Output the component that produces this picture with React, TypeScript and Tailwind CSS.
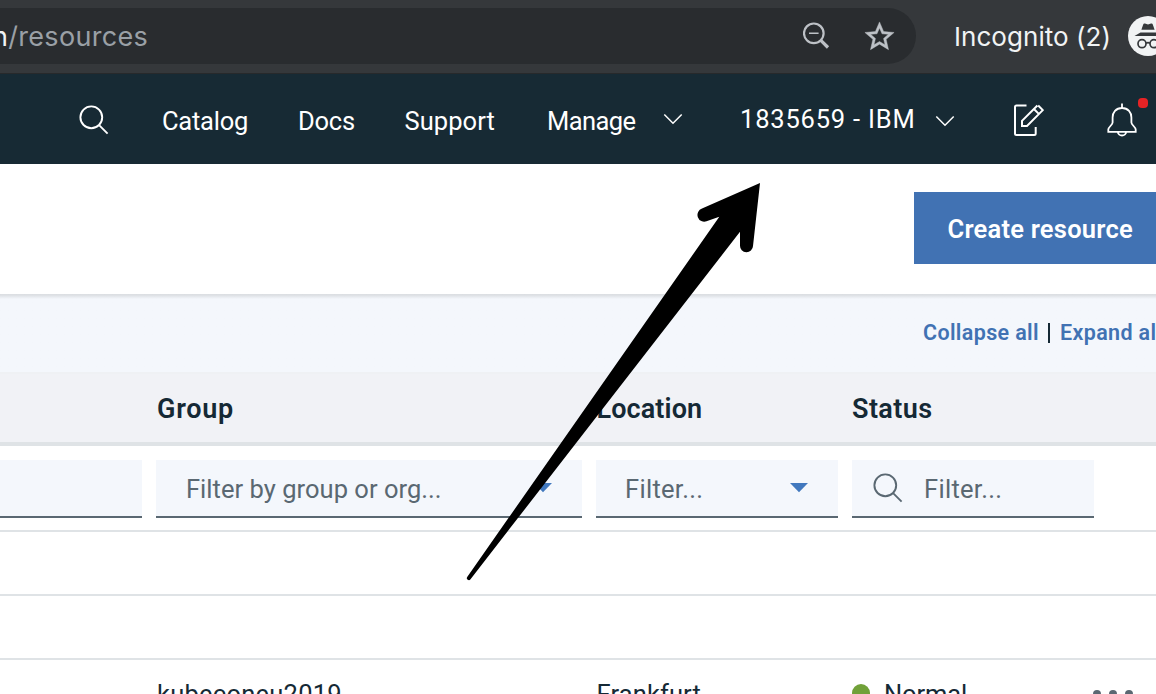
import React from 'react';

const plex = "font-['Roboto','Liberation_Sans',sans-serif]";

function SearchIcon({ className }: { className: string }) {
  return (
    <svg className={className} viewBox="0 0 32 32" fill="none" stroke="currentColor" strokeWidth="1.9">
      <circle cx="13.3" cy="13.3" r="10.9" />
      <path d="M21.1 21.1 29.6 29.6" />
    </svg>
  );
}

function Chevron({ className }: { className: string }) {
  return (
    <svg className={className} viewBox="0 0 20 12" fill="none" stroke="currentColor" strokeWidth="1.5">
      <path d="M1.3 1.5 10 10.2l8.7-8.7" />
    </svg>
  );
}

function BrowserBar() {
  return (
    <div className="flex h-[74px] w-full shrink-0 border-b border-[#27292b] bg-[#35383b] pt-2 font-['Inter','Liberation_Sans',sans-serif]">
      <div className="flex h-14 w-[916px] shrink-0 overflow-hidden rounded-r-full bg-[#292c2f]">
        <div className="-ml-[8px] flex w-[811px] shrink-0 whitespace-pre text-[27px] leading-[58px] tracking-[0.3px] text-[#9aa0a6]">
          <span className="text-[#f1f3f4]">n</span>
          <span>/resources</span>
        </div>
        <svg className="mt-[12px] h-8 w-8 shrink-0 text-[#bdc1c6]" viewBox="0 0 32 32" fill="none" stroke="currentColor">
          <circle cx="10.8" cy="13.3" r="9.8" strokeWidth="2.2" />
          <path d="M6 13.3h9.6" strokeWidth="1.6" />
          <path d="M17.6 20.1 25 27.5" strokeWidth="3.2" />
        </svg>
        <svg className="ml-[27px] mt-[11px] h-[35px] w-[35px] shrink-0 text-[#bdc1c6]" viewBox="0 0 24 24" fill="currentColor" stroke="currentColor" strokeWidth="0.3">
          <path d="M22 9.24l-7.19-.62L12 2 9.19 8.63 2 9.24l5.46 4.73L5.82 21 12 17.27 18.18 21l-1.63-7.03L22 9.24zM12 15.4l-3.76 2.27 1-4.28-3.32-2.88 4.38-.38L12 6.1l1.71 4.04 4.38.38-3.32 2.88 1 4.28L12 15.4z" />
        </svg>
      </div>
      <span className="ml-[38px] w-[174px] shrink-0 whitespace-nowrap text-[26px] leading-[58px] tracking-[0.05px] text-[#f1f3f4]">Incognito (2)</span>
      <svg className="mt-2 h-10 w-[28px] shrink-0" viewBox="0 0 28 40">
        <circle cx="20" cy="20" r="20" fill="#f1f3f4" />
        <g fill="#35383b">
          <path d="M15.2 8.4C15.5 7.5 16.2 7.3 17 7.6Q20 9.2 23 7.6C23.800 7.300 24.500 7.500 24.800 8.400L26.600 13.700H13.400Z" />
          <path d="M6.500 20 12.500 16.500H28V20z" />
        </g>
        <g fill="none" stroke="#35383b" strokeWidth="1.7">
          <circle cx="14" cy="27.700" r="4" />
          <circle cx="26" cy="27.700" r="4" />
          <path d="M18 27.200q2-1 4 0" />
        </g>
      </svg>
    </div>
  );
}

function NavBar() {
  return (
    <nav className="flex h-[90px] w-full shrink-0 whitespace-nowrap bg-[#172a34] text-[25.5px] leading-[95px] text-white">
      <SearchIcon className="ml-[78px] mt-[30px] h-8 w-8 shrink-0" />
      <span className="ml-[52px] w-[136px] shrink-0 tracking-[-0.24px]">Catalog</span>
      <span className="w-[106.500px] shrink-0 tracking-[-0.21px]">Docs</span>
      <span className="w-[142.500px] shrink-0 tracking-[0.06px]">Support</span>
      <span className="w-[116px] shrink-0 tracking-[-0.6px]">Manage</span>
      <Chevron className="mt-[39px] h-3 w-5 shrink-0" />
      <span className="ml-[57px] w-[195px] shrink-0 leading-[91px] tracking-[0.8px]">1835659 - IBM</span>
      <Chevron className="mt-[41px] h-3 w-5 shrink-0" />
      <svg className="ml-[57px] mt-[28px] h-9 w-8 shrink-0" viewBox="0 0 32 36" fill="none" stroke="currentColor" strokeWidth="2">
        <path d="M14.500 3.500H4.500a1.500 1.500 0 0 0-1.500 1.500V31.500A1.500 1.500 0 0 0 4.500 33H22.200a1.500 1.500 0 0 0 1.500-1.500V25" />
        <path d="M26.200 3.500 30.800 8.100 15 23.900H10V18.900L25.400 3.500M21.900 7 27.300 12.400" strokeWidth="2" />
      </svg>
      <div className="relative ml-[62px] mt-[28px] h-9 w-8 shrink-0">
        <svg className="h-9 w-8" viewBox="0 0 32 36" fill="none" stroke="currentColor" strokeWidth="1.800">
          <path d="M16 1.500V6M16 6C9.800 6 6.600 10.500 6.600 15.500V20.500C6.600 23 2.300 25 2.300 27.500V29.800H29.700V27.500C29.700 25 25.400 23 25.400 20.500V15.500C25.400 10.500 22.200 6 16 6ZM11.800 29.800a4.200 3.700 0 0 0 8.400 0" />
        </svg>
        <span className="absolute -top-1 left-8 h-[10px] w-[10px] rounded-[4px] bg-[#e62325]" />
      </div>
    </nav>
  );
}

function Caret() {
  return (
    <svg className="mt-[23px] h-[10px] w-[18px] shrink-0" viewBox="0 0 18 10">
      <path d="M0 0h18L9 9.300z" fill="#4178be" />
    </svg>
  );
}

const field = 'flex h-[58px] shrink-0 border-b-2 border-[#5a6872] bg-[#f4f7fc] leading-[58px] text-[#5a6872]';

export default function App() {
  return (
    <div className={`relative flex h-[694px] w-[1156px] flex-col overflow-hidden bg-white text-[#152935] ${plex}`}>
      <BrowserBar />
      <NavBar />
      <section className="flex h-[130px] w-full shrink-0 justify-end bg-white pt-7">
        <button className="h-[72px] w-[242px] shrink-0 whitespace-nowrap bg-[#4172b3] pl-[33.500px] text-left text-[25.5px] font-semibold leading-[75px] tracking-[0.22px] text-white">Create resource</button>
      </section>
      <div className="flex h-[78px] w-full shrink-0 whitespace-nowrap bg-[#f4f7fc] bg-linear-to-b from-[#dcdfe3] from-[1px] to-[#f4f7fc] to-[5px] pl-[923px] text-[21.5px] font-semibold leading-[77px] tracking-[0.35px] text-[#4172b3]">
        <span className="w-[125px] shrink-0">Collapse all</span>
        <span className="mt-[29px] h-5 w-[2px] shrink-0 bg-[#152935]" />
        <span className="ml-[10px] shrink-0">Expand all</span>
      </div>
      <div className="flex h-[74px] w-full shrink-0 border-b-4 border-t-2 border-b-[#dfe3e6] border-t-[#eff1f4] bg-[#f1f2f6] pl-[157px] text-[27px] font-semibold leading-[70px]">
        <span className="w-[439.500px] shrink-0 tracking-[0.73px]">Group</span>
        <span className="w-[255.500px] shrink-0 tracking-[0.1px]">Location</span>
        <span className="shrink-0 tracking-[0.4px]">Status</span>
      </div>
      <div className="flex h-[86px] w-full shrink-0 gap-[14px] whitespace-nowrap border-b-2 border-[#dfe3e6] pt-[14px] text-[25.5px]">
        <div className={`${field} w-[142px]`} />
        <div className={`${field} w-[426px] pl-[30px]`}>
          <span className="w-[348px] tracking-[0.03px]">Filter by group or org...</span>
          <Caret />
        </div>
        <div className={`${field} w-[242px] pl-[29px]`}>
          <span className="w-[165px] tracking-[0.3px]">Filter...</span>
          <Caret />
        </div>
        <div className={`${field} w-[242px] pl-[20px]`}>
          <SearchIcon className="mt-[12px] h-8 w-8 shrink-0" />
          <span className="ml-[20px] tracking-[0.3px]">Filter...</span>
        </div>
      </div>
      <div className="h-16 w-full shrink-0 border-b-2 border-[#dfe3e6]" />
      <div className="h-16 w-full shrink-0 border-b-2 border-[#dfe3e6]" />
      <div className="flex h-[68px] w-full shrink-0 whitespace-nowrap pl-[157px] text-[25.5px] leading-[68px]">
        <span className="w-[439.500px] shrink-0 tracking-[0.25px]">kubeconeu2019</span>
        <span className="w-[255.500px] shrink-0 tracking-[0.13px]">Frankfurt</span>
        <span className="mt-6 h-[18px] w-[18px] shrink-0 rounded-full bg-[#71a139]" />
        <span className="ml-[14px] w-[209px] shrink-0 tracking-[-0.12px]">Normal</span>
        <span className="mt-[30px] flex gap-2">
          <span className="h-2 w-2 rounded-full bg-[#5a6872]" />
          <span className="h-2 w-2 rounded-full bg-[#5a6872]" />
          <span className="h-2 w-2 rounded-full bg-[#5a6872]" />
        </span>
      </div>
      <svg className="absolute left-[460px] top-[176px] h-[410px] w-[310px]" viewBox="460 176 310 410">
        <path d="M760 183 702 208.500A6.700 6.700 0 0 0 706.500 221.300L719.300 216.800 467.200 577A1.900 1.900 0 0 0 470.500 579.200L740 231.800V245.500A6.500 6.500 0 0 0 753 246Z" fill="#000" />
      </svg>
    </div>
  );
}
